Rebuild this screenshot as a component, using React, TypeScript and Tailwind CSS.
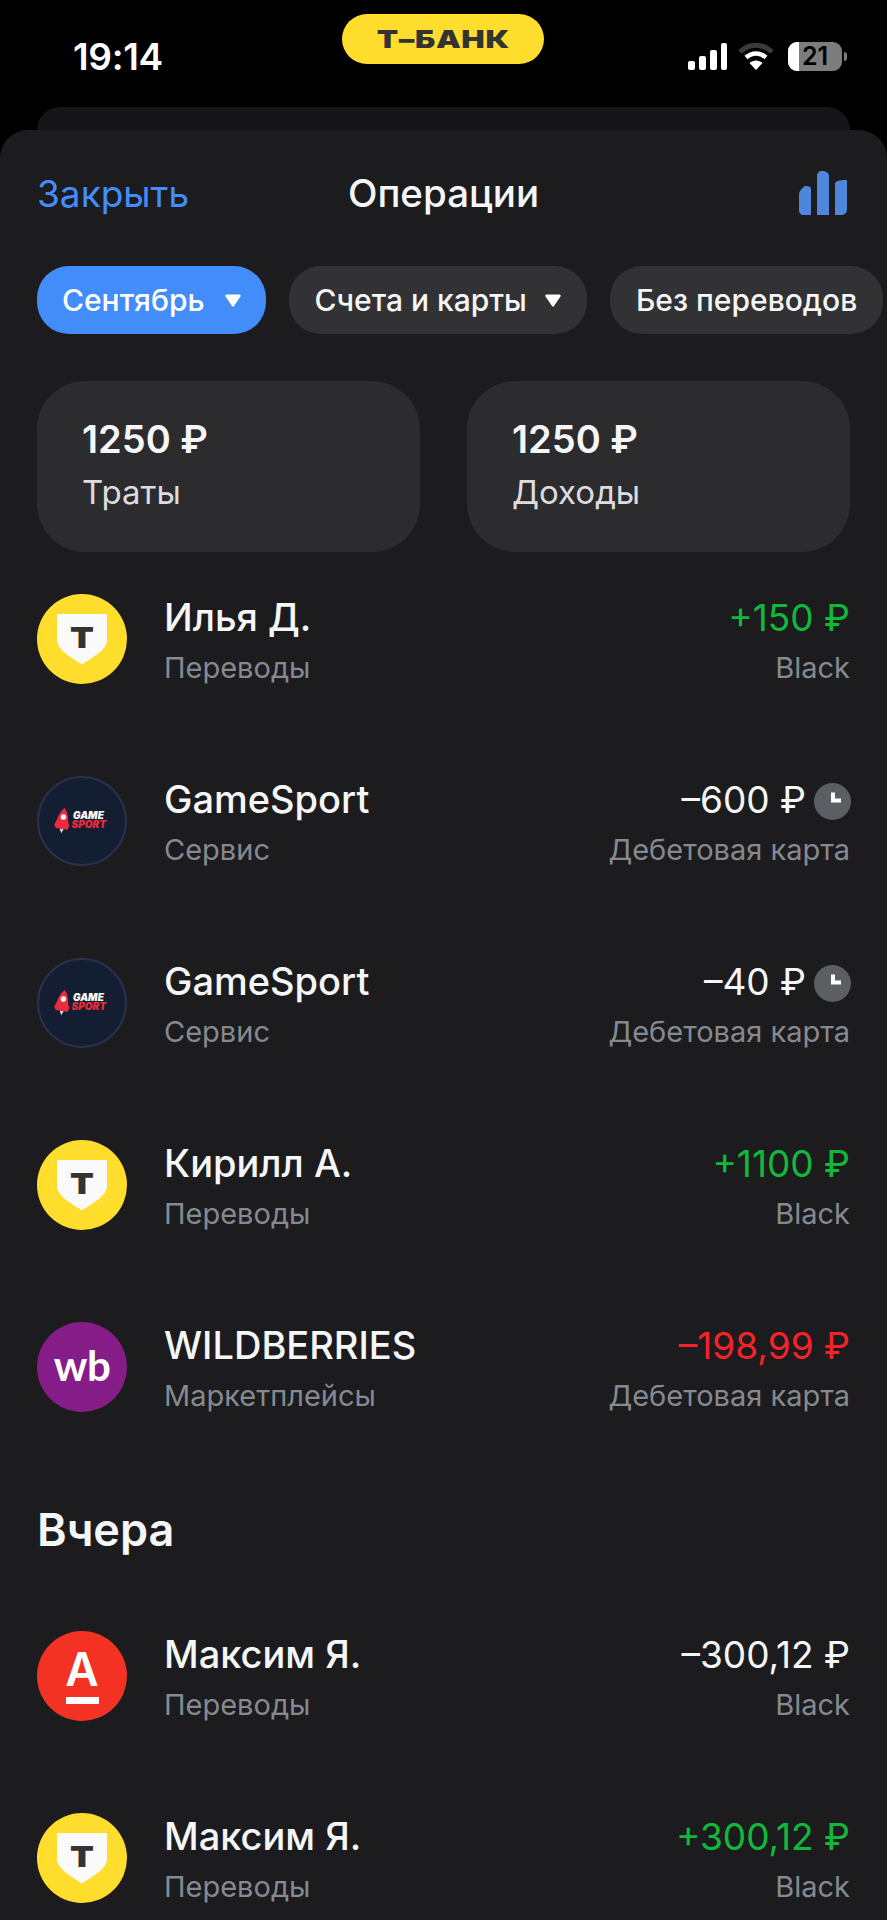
const font = { fontFamily: "Inter, 'Noto Sans', sans-serif" };

type Logo = "tbank" | "game" | "wb" | "alfa";

type Operation = {
  name: string;
  category: string;
  amount: string;
  account: string;
  logo: Logo;
  tone: "plus" | "minus" | "red";
  pending?: boolean;
};

const today: Operation[] = [
  { name: "Илья Д.", category: "Переводы", amount: "+150 ₽", account: "Black", logo: "tbank", tone: "plus" },
  { name: "GameSport", category: "Сервис", amount: "–600 ₽", account: "Дебетовая карта", logo: "game", tone: "minus", pending: true },
  { name: "GameSport", category: "Сервис", amount: "–40 ₽", account: "Дебетовая карта", logo: "game", tone: "minus", pending: true },
  { name: "Кирилл А.", category: "Переводы", amount: "+1100 ₽", account: "Black", logo: "tbank", tone: "plus" },
  { name: "WILDBERRIES", category: "Маркетплейсы", amount: "–198,99 ₽", account: "Дебетовая карта", logo: "wb", tone: "red" },
];

const yesterday: Operation[] = [
  { name: "Максим Я.", category: "Переводы", amount: "–300,12 ₽", account: "Black", logo: "alfa", tone: "minus" },
  { name: "Максим Я.", category: "Переводы", amount: "+300,12 ₽", account: "Black", logo: "tbank", tone: "plus" },
];

const toneStyle = {
  plus: "text-[#10b93c]",
  minus: "text-[#f5f6f7]",
  red: "text-[#f5222a]",
};

function Avatar({ logo }: { logo: Logo }) {
  if (logo === "tbank") {
    return (
      <div className="w-[90px] h-[90px] shrink-0 rounded-full bg-[#ffdd2d] flex items-center justify-center">
        <svg width="50" height="51" viewBox="0 0 50 51">
          <path d="M0 0H50V26C50 36 36 43 25 50.500C14 43 0 36 0 26Z" fill="#fafafa" />
          <text x="20.800" y="34" textAnchor="middle" fontSize="29" fontWeight="900" fill="#333333" transform="scale(1.200 1)" style={font}>Т</text>
        </svg>
      </div>
    );
  }
  if (logo === "game") {
    return (
      <div className="w-[90px] h-[90px] shrink-0 rounded-full bg-[#141e33] border-2 border-[#28324a] flex items-center justify-center">
        <svg width="58" height="26" viewBox="0 0 58 26">
          <g transform="rotate(8 10 12)">
            <path d="M10 0C13 3 15 8 15 12L17 17L16 21H4L2 18L4 12C5 7 7 3 10 0Z" fill="#ee2b3b" />
            <circle cx="10" cy="9" r="2.800" fill="#f4f4f6" />
            <path d="M8 21L10 25.500L12 21Z" fill="#d8d8de" />
          </g>
          <text x="20" y="11" fontSize="10" fontWeight="900" fontStyle="italic" fill="#ffffff" style={font}>GAME</text>
          <text x="18.500" y="20" fontSize="10" fontWeight="900" fontStyle="italic" fill="#ee2b3b" style={font}>SPORT</text>
        </svg>
      </div>
    );
  }
  if (logo === "wb") {
    return (
      <div className="w-[90px] h-[90px] shrink-0 rounded-full bg-[#851c88] flex items-center justify-center">
        <span className="text-[42px] font-bold leading-none text-white tracking-[-0.5px] -mt-[5px]" style={{ fontFamily: "Lato, sans-serif" }}>wb</span>
      </div>
    );
  }
  return (
    <div className="w-[90px] h-[90px] shrink-0 rounded-full bg-[#f33224] flex flex-col items-center justify-center">
      <span className="text-[46px] font-semibold leading-[40px] text-white" style={font}>А</span>
      <div className="w-[33px] h-[7px] bg-white mt-[8px]" />
    </div>
  );
}

function ClockBadge() {
  return (
    <svg width="37" height="37" viewBox="0 0 37 37" className="shrink-0 mt-[2px] -mr-[1px]">
      <circle cx="18.500" cy="18.500" r="18.500" fill="#5b5e63" />
      <path d="M17 9.500H21V15.500H27V19.500H17Z" fill="#ffffff" />
    </svg>
  );
}

function Row({ op }: { op: Operation }) {
  return (
    <div className="flex items-start justify-between h-[90px]">
      <div className="flex items-start gap-[37px] min-w-0">
        <Avatar logo={op.logo} />
        <div className="pt-[1px]">
          <div className="text-[38px] leading-[44px] font-medium text-[#f5f6f7] whitespace-nowrap">{op.name}</div>
          <div className="text-[29px] leading-[38px] mt-[10px] text-[#858a91] whitespace-nowrap">{op.category}</div>
        </div>
      </div>
      <div className="flex flex-col items-end pt-[2px]">
        <div className="flex items-center gap-[8px] h-[44px]">
          <span className={`text-[37px] leading-[44px] whitespace-nowrap ${toneStyle[op.tone]}`}>{op.amount}</span>
          {op.pending && <ClockBadge />}
        </div>
        <div className="text-[29px] leading-[38px] mt-[9px] text-[#858a91] whitespace-nowrap">{op.account}</div>
      </div>
    </div>
  );
}

function Caret() {
  return (
    <svg width="16" height="13" viewBox="0 0 16 13" className="shrink-0">
      <path d="M1.500 0.500H14.500C15.500 0.500 16 1.500 15.500 2.500L9 12C8.500 13 7.500 13 7 12L0.500 2.500C0 1.500 0.500 0.500 1.500 0.500Z" fill="#ffffff" />
    </svg>
  );
}

function StatusIcons() {
  return (
    <div className="flex items-center gap-[11px]">
      <svg width="39" height="27" viewBox="0 0 39 27">
        <rect x="0" y="18" width="7" height="9" rx="2" fill="#fff" />
        <rect x="11" y="13" width="7" height="14" rx="2" fill="#fff" />
        <rect x="22" y="7" width="7" height="20" rx="2" fill="#fff" />
        <rect x="33" y="0" width="6" height="27" rx="2" fill="#fff" />
      </svg>
      <svg width="36" height="28" viewBox="0 0 36 28" fill="none" className="mr-[3px]">
        <path d="M2 9C11 0 25 0 34 9" stroke="#3a3a3a" strokeWidth="5" />
        <path d="M8 14.500C14 9 22 9 28 14.500" stroke="#fff" strokeWidth="4.500" />
        <path d="M18 27L11.500 20C15 16.500 21 16.500 24.500 20Z" fill="#fff" />
      </svg>
      <div className="flex items-center gap-[2px]">
        <div className="relative w-[54px] h-[29px] rounded-[9px] bg-[#7d7d7d] overflow-hidden flex items-center justify-center">
          <div className="absolute left-0 top-0 bottom-0 w-[11px] bg-white" />
          <span className="relative text-[25px] font-semibold text-black leading-none">21</span>
        </div>
        <div className="w-[3px] h-[9px] rounded-r-full bg-[#7d7d7d]" />
      </div>
    </div>
  );
}

export default function App() {
  return (
    <div className="w-[887px] h-[1920px] overflow-hidden bg-black flex flex-col" style={font}>
      {/* Status bar */}
      <div className="relative h-[107px] shrink-0 flex items-start justify-between pl-[73px] pr-[40px] pt-[36px]">
        <span className="text-[37px] leading-[42px] font-semibold text-white tracking-[-0.3px]">19:14</span>
        <div className="absolute left-[342px] top-[14px] w-[202px] h-[50px] rounded-full bg-[#ffdd2d] flex items-center justify-center">
          <span className="text-[25px] font-black text-[#333333] leading-none scale-x-[1.25] tracking-[0.5px]">Т–БАНК</span>
        </div>
        <div className="pt-[6px]">
          <StatusIcons />
        </div>
      </div>

      {/* Card behind the sheet */}
      <div className="h-[23px] shrink-0 mx-[37px] rounded-t-[24px] bg-[#161618]" />

      {/* Sheet */}
      <div className="flex-1 min-h-0 rounded-t-[28px] bg-[#1c1c1e] overflow-hidden">
        <div className="flex items-center justify-between h-[128px] px-[37px] relative">
          <span className="text-[37px] text-[#448dff]">Закрыть</span>
          <span className="absolute left-0 right-0 text-center text-[38.500px] font-medium text-[#f5f6f7]">Операции</span>
          <svg width="48" height="44" viewBox="0 0 48 44" className="mr-[3px] -mt-[2px]">
            <path d="M0 24C0 20 3 17 6 15C8 15 12 15 12 18V44H4C2 44 0 42 0 40Z" fill="#4f86dc" />
            <path d="M18 5C18 2 20 0 23 0C27 0 30 2 30 5V44H18Z" fill="#4f86dc" />
            <path d="M36 12C38 9 43 9 48 9V39C48 42 45 44 42 44H36Z" fill="#4f86dc" />
          </svg>
        </div>

        <div className="flex gap-[23px] pl-[37px] mt-[8px] h-[68px]">
          <div className="flex items-center gap-[20px] h-[68px] px-[25px] rounded-[32px] bg-[#438dfb] shrink-0">
            <span className="text-[30px] font-medium text-white whitespace-nowrap">Сентябрь</span>
            <Caret />
          </div>
          <div className="flex items-center gap-[18px] h-[68px] px-[26px] rounded-[32px] bg-[#323234] shrink-0">
            <span className="text-[30px] font-medium text-[#f5f6f7] whitespace-nowrap">Счета и карты</span>
            <Caret />
          </div>
          <div className="flex items-center h-[68px] px-[26px] rounded-[32px] bg-[#323234] shrink-0">
            <span className="text-[30px] font-medium text-[#f5f6f7] whitespace-nowrap">Без переводов</span>
          </div>
        </div>

        <div className="grid grid-cols-2 gap-[47px] px-[37px] mt-[47px]">
          {["Траты", "Доходы"].map((label) => (
            <div key={label} className="h-[171px] rounded-[48px] bg-[#2c2c2e] pl-[45px] pt-[35px]">
              <div className="text-[38px] leading-[46px] font-semibold text-[#f5f6f7]">1250 ₽</div>
              <div className="text-[33px] leading-[40px] mt-[10px] text-[#dcdde0]">{label}</div>
            </div>
          ))}
        </div>

        <div className="flex flex-col gap-[92px] px-[37px] mt-[42px]">
          {today.map((op, i) => (
            <Row key={i} op={op} />
          ))}
        </div>

        <div className="px-[37px] mt-[95px] mb-[78px] text-[45px] leading-[46px] font-semibold text-[#f5f6f7]">Вчера</div>

        <div className="flex flex-col gap-[92px] px-[37px]">
          {yesterday.map((op, i) => (
            <Row key={i} op={op} />
          ))}
        </div>
      </div>
    </div>
  );
}
